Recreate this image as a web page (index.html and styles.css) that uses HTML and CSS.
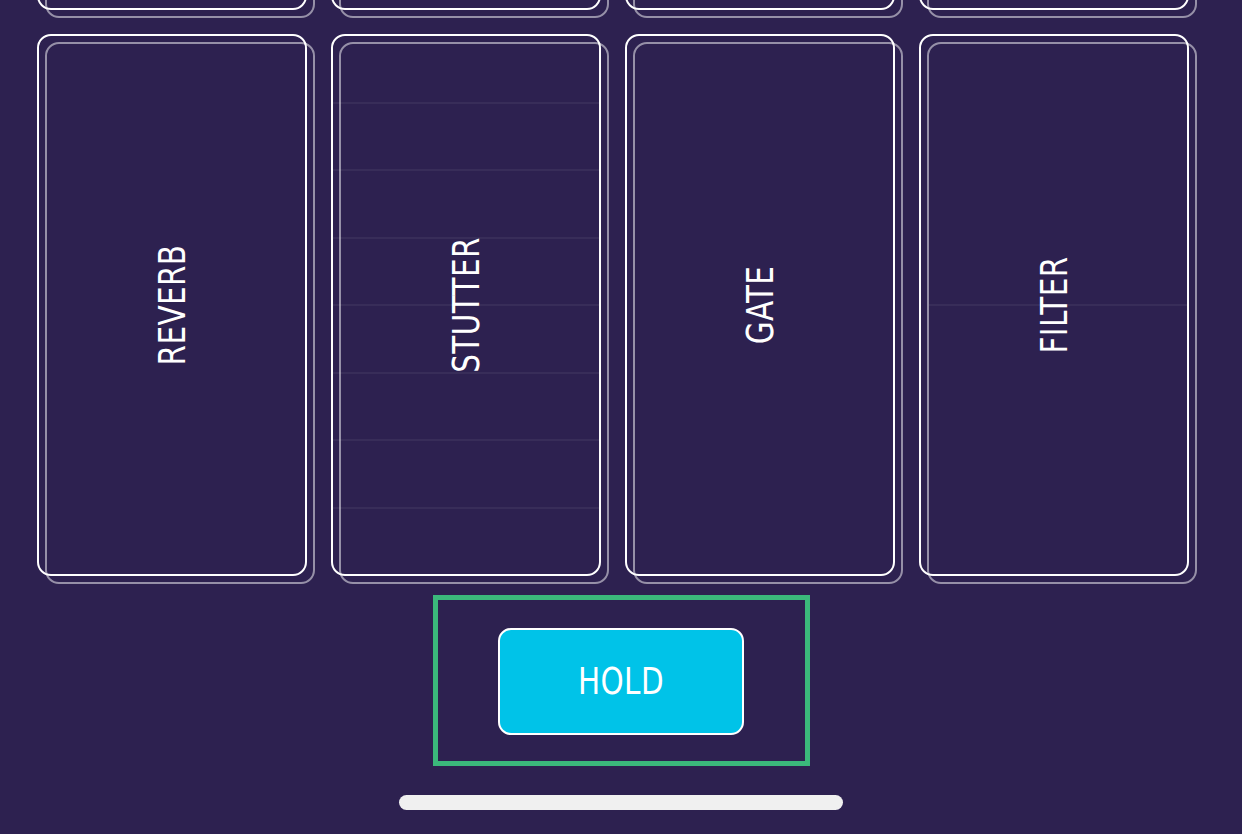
FILE: index.html
```html
<!DOCTYPE html>
<html lang="en">
<head>
<meta charset="utf-8">
<title>Pads</title>
<link rel="stylesheet" href="styles.css">
</head>
<body>
<main class="screen">
  <section class="pads">
    <div class="pad"></div>
    <div class="pad"></div>
    <div class="pad"></div>
    <div class="pad"></div>
    <div class="pad"><span class="pad-label">REVERB</span></div>
    <div class="pad pad-stutter">
      <div class="guides guides-8"><i></i><i></i><i></i><i></i><i></i><i></i><i></i><i></i></div>
      <span class="pad-label">STUTTER</span>
    </div>
    <div class="pad"><span class="pad-label">GATE</span></div>
    <div class="pad pad-filter">
      <div class="guides guides-2"><i></i><i></i></div>
      <span class="pad-label">FILTER</span>
    </div>
  </section>
  <section class="hold-area">
    <div class="hold-frame">
      <button class="hold-btn"><span class="hold-text">HOLD</span></button>
    </div>
  </section>
  <div class="home-indicator"></div>
</main>
</body>
</html>
```
FILE: styles.css
```css
html, body {
  margin: 0;
  padding: 0;
  background: #2d2150;
  height: 100%;
  overflow: hidden;
}

.screen {
  width: 1242px;
  height: 834px;
  display: flex;
  flex-direction: column;
  align-items: center;
  background: #2d2150;
  font-family: "DejaVu Sans Condensed", "DejaVu Sans", sans-serif;
  font-stretch: condensed;
  color: #fff;
}

.pads {
  align-self: flex-start;
  display: grid;
  grid-template-columns: repeat(4, 270px);
  grid-template-rows: 542px 542px;
  column-gap: 24px;
  row-gap: 24px;
  margin-top: -532px;
  margin-left: 37px;
}

.pad {
  position: relative;
  border: 2px solid #ffffff;
  border-radius: 14px;
  display: flex;
  align-items: center;
  justify-content: center;
  overflow: visible;
}

.pad::before {
  content: "";
  position: absolute;
  top: 6px;
  left: 6px;
  right: -10px;
  bottom: -10px;
  border: 2px solid rgba(255, 255, 255, 0.5);
  border-radius: 14px;
  pointer-events: none;
}

.guides {
  position: absolute;
  inset: 0;
  display: flex;
  flex-direction: column;
  pointer-events: none;
}

.guides i {
  flex: 1;
  border-bottom: 2px solid rgba(255, 255, 255, 0.055);
}

.guides i:last-child {
  border-bottom: 0;
}

.pad-filter .guides i {
  margin-left: 8px;
}

.pad-label {
  display: block;
  font-size: 38px;
  letter-spacing: 0.5px;
  line-height: 1;
  white-space: nowrap;
  transform: rotate(-90deg) scaleX(0.86);
  position: relative;
}

.hold-area {
  margin-top: 19px;
  display: flex;
  justify-content: center;
}

.hold-frame {
  width: 367px;
  height: 161px;
  border: 5px solid #3bb87b;
  display: flex;
  align-items: center;
  justify-content: center;
}

.hold-btn {
  width: 246px;
  height: 107px;
  margin-top: 1px;
  background: #00c3e8;
  border: 2px solid #ffffff;
  border-radius: 13px;
  display: flex;
  align-items: center;
  justify-content: center;
  padding: 0;
  font-family: inherit;
  font-stretch: condensed;
  color: #fff;
}

.hold-text {
  display: block;
  font-size: 38px;
  letter-spacing: 0.5px;
  line-height: 1;
  transform: scaleX(0.86);
}

.home-indicator {
  margin-top: 29px;
  width: 444px;
  height: 15px;
  border-radius: 8px;
  background: #f0f0f0;
}
```
